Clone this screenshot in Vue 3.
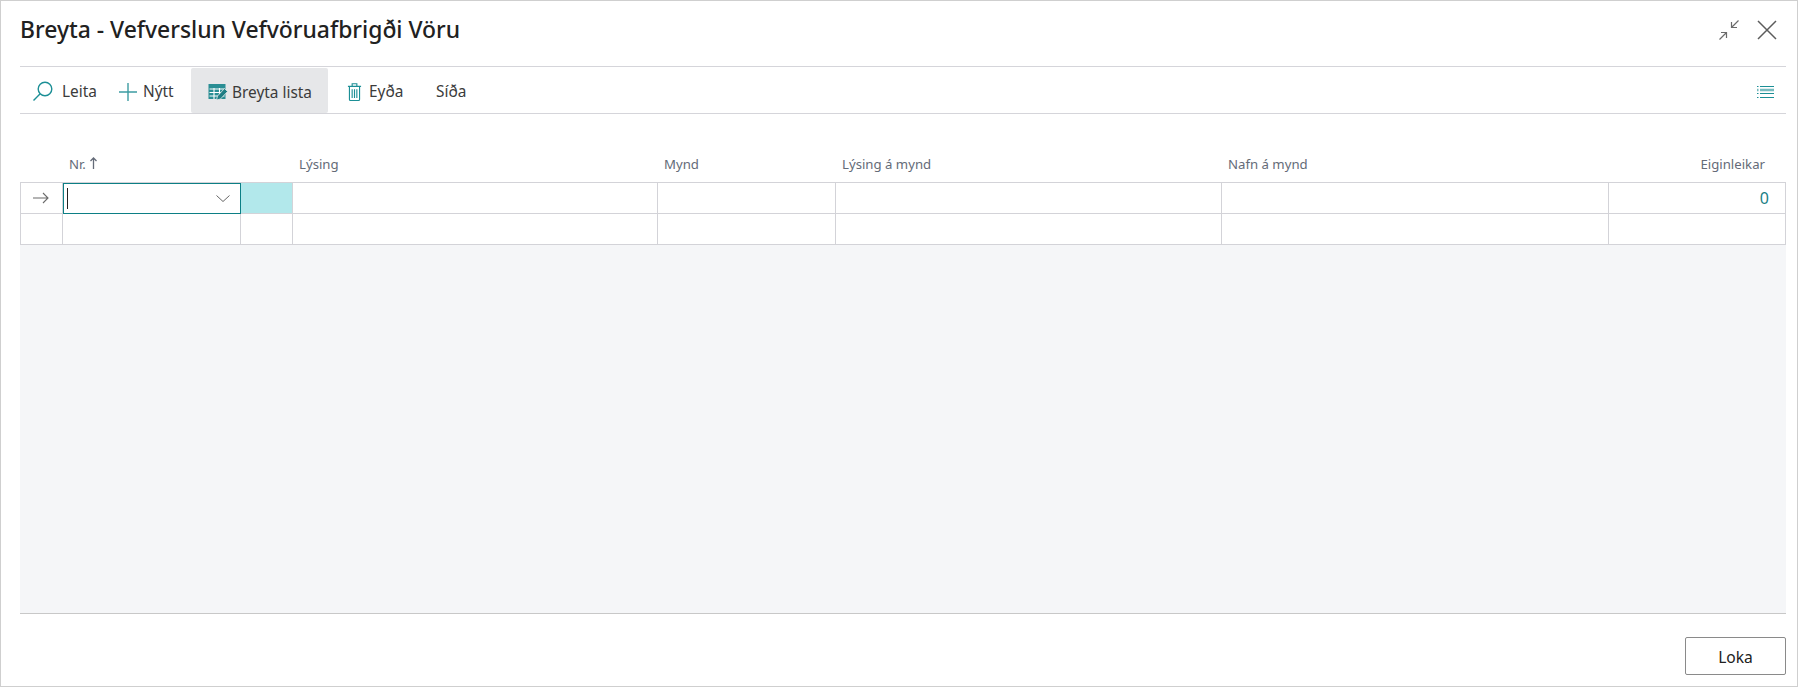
<template>
  <div class="dialog">
    <header class="title-bar">
      <h1 class="title">Breyta - Vefverslun Vefvöruafbrigði Vöru</h1>
      <div class="window-btns">
        <svg width="22" height="22" viewBox="0 0 22 22" fill="none" stroke="#6b6b6b" stroke-width="1.2">
          <path d="M1.5 20.5 L8.5 13.5 M3 13.5 H8.5 V19 M20.5 1.5 L13.5 8.5 M13.5 3 V8.5 H19" />
        </svg>
        <svg width="22" height="22" viewBox="0 0 22 22" fill="none" stroke="#5c5c5c" stroke-width="1.5">
          <path d="M2 2 L20 20 M20 2 L2 20" />
        </svg>
      </div>
    </header>

    <nav class="toolbar">
      <button class="tool tool-search">
        <svg width="22" height="22" viewBox="0 0 22 22" fill="none" stroke="#1c8f96" stroke-width="1.4">
          <circle cx="13" cy="8" r="6.8" />
          <path d="M8.2 12.8 L1.5 19.5" />
        </svg>
        <span>Leita</span>
      </button>
      <button class="tool tool-new">
        <svg width="20" height="20" viewBox="0 0 20 20" fill="none" stroke="#3d9ca2" stroke-width="1.4">
          <path d="M10 1 V19 M1 10 H19" />
        </svg>
        <span>Nýtt</span>
      </button>
      <button class="tool tool-edit">
        <svg width="20" height="18" viewBox="0 0 20 18">
          <rect x="0.5" y="1" width="17" height="15" fill="#2a8e94" />
          <path d="M1.5 6 H16.5 M1.5 9.5 H16.5 M1.5 13 H16.5 M6 5 V16 M11.5 5 V16" stroke="#fff" stroke-width="1.1" />
          <path d="M8.5 17 L9.5 13 L16.5 5.5 L19.5 8.5 L12.5 16 Z" fill="#1f7d83" stroke="#e6e7e9" stroke-width="0.8" />
        </svg>
        <span>Breyta lista</span>
      </button>
      <button class="tool tool-delete">
        <svg width="15" height="20" viewBox="0 0 16 20" fill="none" stroke="#1c8f96" stroke-width="1.2">
          <path d="M1 4 H15 M5.5 4 V1.2 H10.5 V4 M2.6 4 V18 a1 1 0 0 0 1 1 H12.4 a1 1 0 0 0 1 -1 V4 M5.5 7 V16.5 M8 7 V16.5 M10.5 7 V16.5" />
        </svg>
        <span>Eyða</span>
      </button>
      <button class="tool tool-page"><span>Síða</span></button>
      <svg class="list-icon" width="17" height="14" viewBox="0 0 17 14" fill="none">
        <path d="M0 1.5 H1.5 M3 1.5 H17 M0 8.5 H1.5 M3 8.5 H17 M0 12.5 H1.5 M3 12.5 H17" stroke="#1c8f96" />
        <path d="M0 5 H1.5 M3 5 H17" stroke="#1c8f96" stroke-opacity="0.6" stroke-width="2.4" />
      </svg>
    </nav>

    <div class="grid-wrap">
      <div class="head-row">
        <div></div>
        <div class="head">
          Nr.
          <svg class="sort" width="7" height="12" viewBox="0 0 7 12" fill="none" stroke="#646b78" stroke-width="1.3">
            <path d="M3.5 12 V1 M0.5 4 L3.5 1 L6.5 4" />
          </svg>
        </div>
        <div></div>
        <div v-for="col in headers" :key="col" class="head">{{ col }}</div>
        <div class="head head-right">Eiginleikar</div>
      </div>

      <div class="row first">
        <div class="cell arrow">
          <svg width="16" height="12" viewBox="0 0 16 12" fill="none" stroke="#6b6b6b" stroke-width="1.1">
            <path d="M0 6 H15 M10 1 L15 6 L10 11" />
          </svg>
        </div>
        <div class="cell active">
          <i class="caret"></i>
          <svg class="chevron" width="14" height="7" viewBox="0 0 14 7" fill="none" stroke="#666" stroke-width="1">
            <path d="M0.5 0.5 L7 6.5 L13.5 0.5" />
          </svg>
        </div>
        <div class="cell aqua"></div>
        <div class="cell" v-for="col in headers" :key="col"></div>
        <div class="cell number">0</div>
      </div>

      <div class="row">
        <div class="cell" v-for="n in 8" :key="n"></div>
      </div>

      <div class="empty"></div>
    </div>

    <footer class="footer">
      <button class="close-btn">Loka</button>
    </footer>
  </div>
</template>

<script setup>
const headers = ['Lýsing', 'Mynd', 'Lýsing á mynd', 'Nafn á mynd']
</script>

<style>
html, body {
  margin: 0;
  background: #fff;
}
</style>

<style scoped>
.dialog {
  box-sizing: border-box;
  width: 1798px;
  height: 687px;
  border: 1px solid #cfcfcf;
  padding: 0 11px 0 19px;
  display: flex;
  flex-direction: column;
  font-family: "Noto Sans", "Open Sans", sans-serif;
  color: #212121;
  background: #fff;
}

.title-bar {
  height: 65px;
  flex: none;
  display: flex;
  align-items: center;
  justify-content: space-between;
  border-bottom: 1px solid #d5d5da;
}

.title {
  margin: 0 0 9px;
  font-size: 22.9px;
  font-weight: 500;
  color: #212121;
}

.window-btns {
  display: flex;
  align-items: center;
  gap: 16px;
  margin: 0 8px 8px 0;
}

.toolbar {
  height: 46px;
  flex: none;
  display: flex;
  align-items: stretch;
  border-bottom: 1px solid #d5d5da;
  position: relative;
}

.tool {
  display: flex;
  align-items: center;
  gap: 7px;
  border: 0;
  background: none;
  padding: 3px 0 0;
  font: inherit;
  font-size: 15.4px;
  color: #3b3b3b;
}

.tool-search { padding-left: 12px; width: 98px; gap: 8px; }
.tool-new { width: 73px; gap: 5px; }
.tool-edit {
  width: 137px;
  padding-left: 17px;
  gap: 4px;
  margin: 1px 0 0;
  background: #e6e7e9;
  border-radius: 2px;
}
.tool-delete { padding-left: 19px; width: 90px; }
.tool-page { padding-left: 18px; }

.list-icon {
  position: absolute;
  right: 12px;
  top: 18px;
}

.grid-wrap {
  flex: none;
  display: flex;
  flex-direction: column;
  height: 499px;
  border-bottom: 1px solid #c8c8c8;
}

.head-row,
.row {
  display: grid;
  grid-template-columns: 42px 178px 52px 365px 178px 386px 387px 177px;
}

.head-row {
  height: 68px;
  box-sizing: border-box;
  align-items: end;
  padding-bottom: 9px;
}

.head {
  padding-left: 7px;
  font-size: 13.2px;
  line-height: 18px;
  color: #646b78;
}

.sort {
  margin-left: 1px;
}

.head-right {
  text-align: right;
  padding: 0 20px 0 0;
}

.row {
  height: 31px;
  border-left: 1px solid #d3d3d8;
  border-bottom: 1px solid #d3d3d8;
  box-sizing: border-box;
}

.row.first {
  border-top: 1px solid #d3d3d8;
  height: 32px;
}

.cell {
  border-right: 1px solid #d3d3d8;
  box-sizing: border-box;
  position: relative;
  min-width: 0;
}

.arrow {
  display: flex;
  align-items: center;
  justify-content: center;
  padding-right: 2px;
}

.active {
  border: 1px solid #0c7f85;
  margin: 0 0 -1px 0;
  display: flex;
  align-items: center;
}

.caret {
  width: 1px;
  height: 21px;
  background: #222;
  margin-left: 3px;
}

.chevron {
  position: absolute;
  right: 10px;
  top: 11px;
}

.aqua {
  background: #b2e8eb;
}

.number {
  text-align: right;
  padding-right: 16px;
  font-size: 16px;
  line-height: 30px;
  color: #1a7f85;
}

.empty {
  flex: 1;
  background: #f5f6f8;
}

.footer {
  flex: 1;
  display: flex;
  justify-content: flex-end;
  align-items: flex-start;
  padding-top: 23px;
}

.close-btn {
  box-sizing: border-box;
  width: 101px;
  height: 38px;
  padding-top: 2px;
  background: #fff;
  border: 1px solid #8a8a8a;
  border-radius: 2px;
  font: inherit;
  font-size: 15.6px;
  color: #212121;
}
</style>
